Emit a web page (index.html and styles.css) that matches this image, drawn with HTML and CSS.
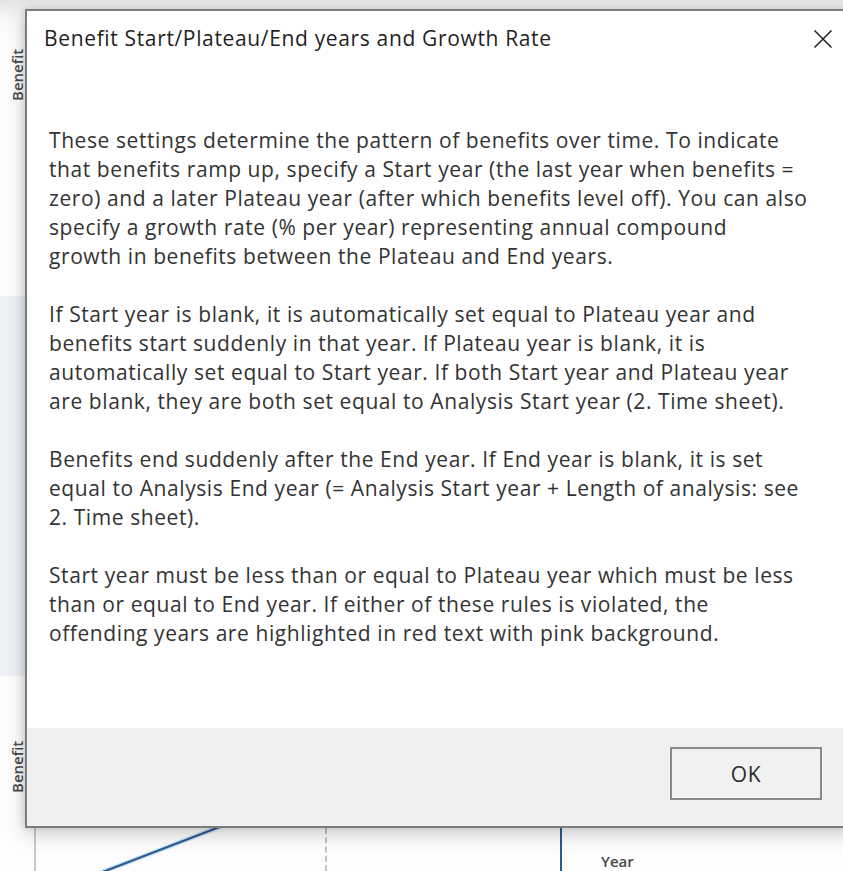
FILE: index.html
```html
<!DOCTYPE html>
<html lang="en">
<head>
<meta charset="utf-8">
<title>Benefit Start/Plateau/End years and Growth Rate</title>
<link rel="stylesheet" href="styles.css">
</head>
<body>
<div class="sheet">
  <!-- chart behind the dialog -->
  <div class="band"></div>
  <span class="axis-label axis-top">Benefit</span>
  <span class="axis-label axis-bottom">Benefit</span>
  <div class="vline vline-gray"></div>
  <div class="vline vline-dash"></div>
  <div class="vline vline-blue"></div>
  <svg class="series" width="843" height="871" viewBox="0 0 843 871">
    <line x1="100" y1="873" x2="222" y2="826" stroke="#cfe3f5" stroke-width="5"/>
    <line x1="100" y1="873" x2="222" y2="826" stroke="#2c5b8e" stroke-width="2.2"/>
  </svg>
  <span class="year-label">Year</span>

  <!-- dialog -->
  <div class="dialog" role="dialog">
    <div class="dialog-head">
      <span class="dialog-title">Benefit Start/Plateau/End years and Growth Rate</span>
      <svg class="close" width="20" height="20" viewBox="0 0 20 20">
        <path d="M1.5 1.5 L18.5 18.5 M18.5 1.5 L1.5 18.5" stroke="#1e1e1e" stroke-width="1.5" fill="none"/>
      </svg>
    </div>
    <div class="dialog-body">
      <p>These settings determine the pattern of benefits over time. To indicate<br>that benefits ramp up, specify a Start year (the last year when benefits =<br>zero) and a later Plateau year (after which benefits level off). You can also<br>specify a growth rate (% per year) representing annual compound<br>growth in benefits between the Plateau and End years.</p>
      <p>If Start year is blank, it is automatically set equal to Plateau year and<br>benefits start suddenly in that year. If Plateau year is blank, it is<br>automatically set equal to Start year. If both Start year and Plateau year<br>are blank, they are both set equal to Analysis Start year (2. Time sheet).</p>
      <p>Benefits end suddenly after the End year. If End year is blank, it is set<br>equal to Analysis End year (= Analysis Start year + Length of analysis: see<br>2. Time sheet).</p>
      <p>Start year must be less than or equal to Plateau year which must be less<br>than or equal to End year. If either of these rules is violated, the<br>offending years are highlighted in red text with pink background.</p>
    </div>
    <div class="dialog-foot">
      <button class="ok">OK</button>
    </div>
  </div>
</div>
</body>
</html>
```
FILE: styles.css
```css
html, body {
  margin: 0;
  padding: 0;
}

body {
  width: 843px;
  height: 871px;
  overflow: hidden;
  background: #fbfbfb;
  font-family: "Open Sans", "Noto Sans", sans-serif;
}

.sheet {
  position: relative;
  width: 843px;
  height: 871px;
  background: linear-gradient(#e4e4e4 0, #ececec 8px, #f8f8f8 20px, #fdfdfd 40px);
}

/* pale plot area strip at the left edge */
.band {
  position: absolute;
  left: 0;
  top: 296px;
  width: 25px;
  height: 380px;
  background: #edf1f5;
}

.axis-label {
  position: absolute;
  font-size: 15px;
  font-weight: 600;
  line-height: 16px;
  color: #4a4a4a;
  transform: rotate(-90deg);
  transform-origin: left top;
}

.axis-top {
  left: 9px;
  top: 101px;
}

.axis-bottom {
  left: 9px;
  top: 793px;
}

.vline {
  position: absolute;
  top: 828px;
  height: 43px;
  width: 0;
}

.vline-gray {
  left: 34px;
  border-left: 2px solid #c8c8c8;
}

.vline-dash {
  left: 325px;
  border-left: 2px dashed #c2c2c2;
}

.vline-blue {
  left: 560px;
  border-left: 2px solid #2c5b8e;
}

.series {
  position: absolute;
  left: 0;
  top: 0;
}

.year-label {
  position: absolute;
  left: 601px;
  top: 851px;
  font-size: 15px;
  font-weight: 600;
  color: #474747;
}

/* dialog window */
.dialog {
  position: absolute;
  left: 25px;
  top: 9px;
  width: 830px;
  height: 819px;
  box-sizing: border-box;
  border: 2px solid #7c7c7c;
  background: #fff;
  display: flex;
  flex-direction: column;
  box-shadow: 0 6px 18px rgba(0, 0, 0, 0.2), -2px 0 6px rgba(0, 0, 0, 0.1);
}

.dialog-head {
  height: 54px;
  flex: none;
  display: flex;
  align-items: center;
  justify-content: space-between;
  padding: 0 20px 0 17px;
}

.dialog-title {
  font-size: 21px;
  letter-spacing: 0.65px;
  color: #1f1f1f;
  line-height: 28px;
}

.close {
  flex: none;
  margin-top: 2px;
}

.dialog-body {
  flex: 1;
  padding: 61px 0 0 22px;
  color: #333;
  font-size: 21px;
  letter-spacing: 0.58px;
  line-height: 29px;
  white-space: nowrap;
}

.dialog-body p {
  margin: 0 0 29px;
}

.dialog-foot {
  height: 98px;
  flex: none;
  box-sizing: border-box;
  background: #f0f0f0;
  display: flex;
  align-items: flex-start;
  padding: 19px 0 0 643px;
}

.ok {
  width: 152px;
  height: 53px;
  box-sizing: border-box;
  border: 2px solid #8a8a8a;
  background: #f1f1f1;
  font-family: inherit;
  font-size: 21px;
  letter-spacing: 0.6px;
  color: #2b2b2b;
  padding: 0;
}
```
